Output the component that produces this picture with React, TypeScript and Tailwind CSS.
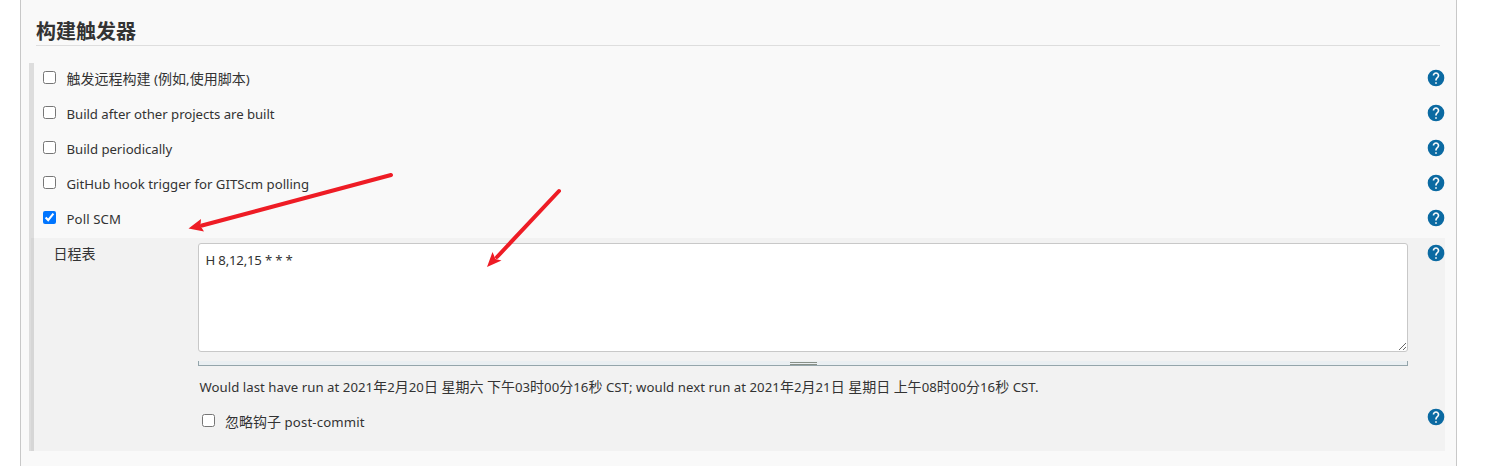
import React from "react";

function Help({ className = "" }: { className?: string }) {
  return (
    <svg viewBox="0 0 24 24" className={`h-5 w-5 shrink-0 ${className}`}>
      <circle cx="12" cy="12" r="10" fill="#0b6aa2" />
      <path
        fill="#f9f9f9"
        d="M13 19h-2v-2h2v2zm2.07-7.75l-.9.92C13.45 12.9 13 13.5 13 15h-2v-.5c0-1.1.45-2.1 1.17-2.83l1.24-1.26c.37-.36.59-.86.59-1.41 0-1.1-.9-2-2-2s-2 .9-2 2H8c0-2.21 1.79-4 4-4s4 1.79 4 4c0 .88-.36 1.68-.93 2.25z"
      />
    </svg>
  );
}

function Check({ checked = false }: { checked?: boolean }) {
  return (
    <input
      type="checkbox"
      defaultChecked={checked}
      className="m-0 block h-[13px] w-[13px] shrink-0 accent-[#0075ff]"
    />
  );
}

// Chinese runs are set slightly larger than the Latin text around them.
function Mixed({ text }: { text: string }) {
  return (
    <>
      {text.split(/([\u4e00-\u9fff]+)/).map((part, i) =>
        i % 2 ? (
          <span key={i} className="text-[14px] tracking-normal">
            {part}
          </span>
        ) : (
          part
        ),
      )}
    </>
  );
}

const rows = [
  { label: "触发远程构建 (例如,使用脚本)", cls: "tracking-[0.1px]" },
  { label: "Build after other projects are built", cls: "tracking-[-0.04px]" },
  { label: "Build periodically", cls: "tracking-[-0.03px]" },
  { label: "GitHub hook trigger for GITScm polling", cls: "tracking-normal" },
  { label: "Poll SCM", cls: "tracking-[0.1px]", checked: true },
];

function Arrows() {
  return (
    <svg className="pointer-events-none absolute inset-0" width="1501" height="466" fill="#ee1c25" stroke="#ee1c25">
      <path d="M391 175L202 225.500" strokeWidth="4" strokeLinecap="round" />
      <path d="M188.500 228.500L201 219L200.500 226L204 231.500Z" stroke="none" />
      <path d="M559 191L497 257" strokeWidth="4" strokeLinecap="round" />
      <path d="M487 267L492.500 252L495.500 259L501.500 260.500Z" stroke="none" />
    </svg>
  );
}

export default function App() {
  return (
    <div className="relative h-[466px] w-[1501px] overflow-hidden bg-white pl-5 font-['Noto_Sans','Noto_Sans_CJK_SC',sans-serif] text-[13.2px] text-[#333]">
      <main className="h-full w-[1437px] border-x border-[#c8c8c8] bg-[#f9f9f9] pl-2">
        <h2 className="ml-[7px] h-[46px] w-[1404px] border-b border-[#dedede] pt-[18px] text-[20px] leading-[28px] font-bold">
          构建触发器
        </h2>
        <section className="mt-[17px] h-[388px] w-[1416px] border-l-[5px] border-[#ddd]">
          {rows.map((r) => (
            <div key={r.label} className="flex h-[35px] items-start pt-[5px] pl-[9px]">
              <label className="flex grow items-start">
                <span className="mt-[3px] mr-[10px]">
                  <Check checked={r.checked} />
                </span>
                <span className={`mt-[1px] ml-[0.5px] leading-5 whitespace-nowrap ${r.cls}`}>
                  <Mixed text={r.label} />
                </span>
              </label>
              <Help className="-mr-px" />
            </div>
          ))}
          <div className="-ml-[3px] flex h-[213px] bg-black/[0.028] pt-[5px] pl-[3px]">
            <div className="w-[164px] shrink-0 pt-[1px] pl-[19.5px] text-[14px] leading-5">日程表</div>
            <div className="w-[1210px] shrink-0">
              <textarea
                readOnly
                value="H 8,12,15 * * *"
                className="block h-[109px] w-full resize rounded-[3px] border border-[#c8c8c8] bg-white px-[6.5px] py-[6px] leading-5 tracking-[-0.2px] outline-none"
              />
              <div className="mt-[9px] flex h-[5px] justify-center border-x border-b border-[#94a5ab] bg-[#eaeff2]">
                <div className="mt-[1px] h-[3px] w-[27px] border-y border-[#889088]" />
              </div>
              <div className="mt-[11px] pl-[1.5px] leading-5 tracking-[0.045px] whitespace-nowrap">
                <Mixed text="Would last have run at 2021年2月20日 星期六 下午03时00分16秒 CST; would next run at 2021年2月21日 星期日 上午08时00分16秒 CST." />
              </div>
              <label className="mt-[15px] flex items-start pl-1">
                <span className="mt-[2px] mr-[10px]">
                  <Check />
                </span>
                <span className="leading-5 tracking-[0.15px]">
                  <Mixed text="忽略钩子 post-commit" />
                </span>
              </label>
            </div>
            <div className="ml-[18px] flex flex-col gap-[144px]">
              <Help />
              <Help />
            </div>
          </div>
        </section>
      </main>
      <Arrows />
    </div>
  );
}
